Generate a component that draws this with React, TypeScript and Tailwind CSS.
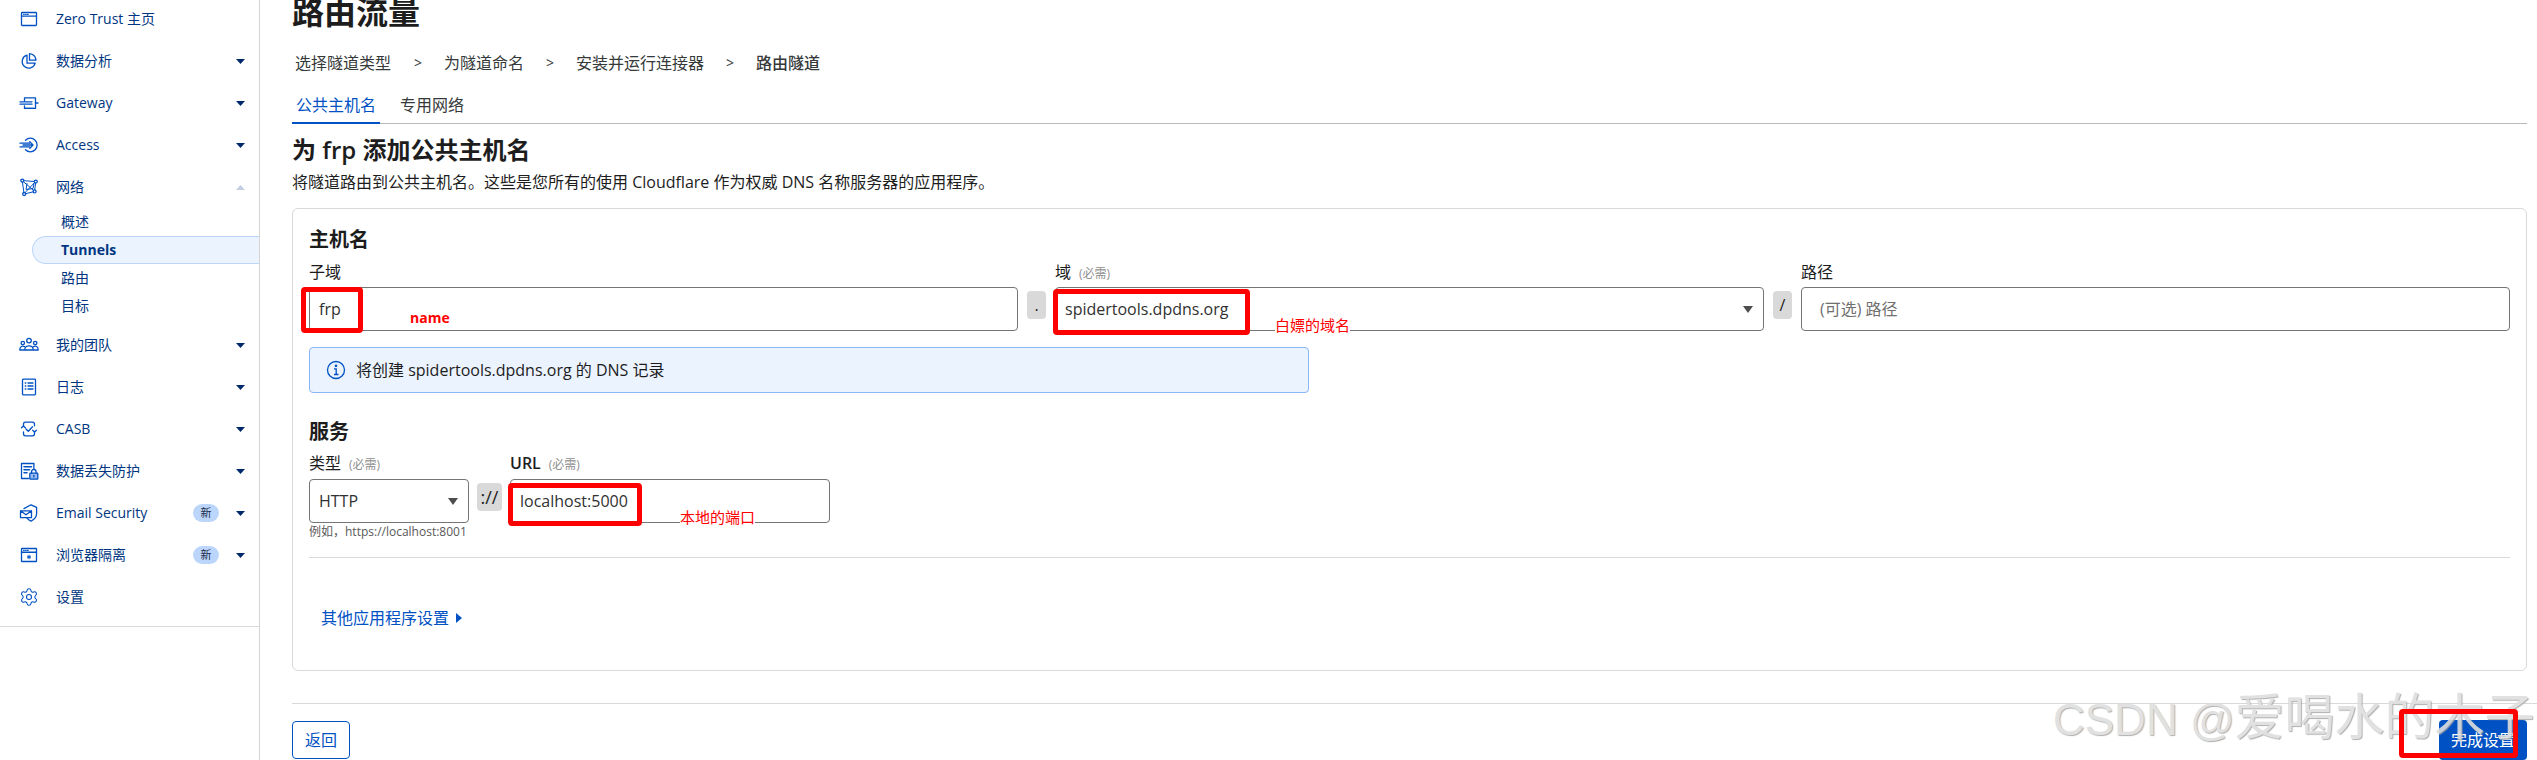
import { Settings } from "lucide-react";
import type { ReactNode } from "react";

function Icon({ children }: { children: ReactNode }) {
    return (
        <svg viewBox="0 0 20 20" className="h-5 w-5 shrink-0" fill="none" stroke="#0051c3" strokeWidth="1.3" strokeLinecap="round" strokeLinejoin="round">
            {children}
        </svg>
    );
}

const icons: Record<string, ReactNode> = {
    home: <Icon><rect x="2.5" y="3.5" width="15" height="13" rx=".8" /><path d="M2.5 7.2h15M4.6 5.3h.6M6.6 5.3h.6M8.6 5.3h.6" /></Icon>,
    pie: <Icon><path d="M8 4.2a6.6 6.6 0 1 0 8.2 8H8z" /><path d="M10.5 2.6c3.6.3 6 2.8 6.6 6.6h-6.6z" /></Icon>,
    gateway: <Icon><path d="M5.5 8V4.8h11v10.6h-11v-2.4" /><path d="M1 8.8h12M1 11.2h12M16.5 10H19" /><path d="M5.5 15.4h9" /></Icon>,
    access: <Icon><path d="M6.5 5.2a6.8 6.8 0 1 1 0 9.6" /><path d="M1 8.2h9.5M1 11.8h9.5M4 10h9.5M10.8 6.8 14 10l-3.2 3.2" /></Icon>,
    network: <Icon><circle cx="3.3" cy="3.6" r="1.5" /><circle cx="16.8" cy="4.6" r="1.5" /><circle cx="15.6" cy="14.4" r="1.5" /><circle cx="5.2" cy="17" r="1.5" /><path d="M4.8 3.7l10.5.8M16.6 6.1l-.9 6.8M14.2 14.8l-7.6 1.9M4.9 15.5 3.4 5.1M4.4 4.7l10.1 8.6M15.6 5.6 6 15.7M8 6.5l-1 6 7-1 1-5" strokeWidth="1" /></Icon>,
    team: <Icon><circle cx="10" cy="5.6" r="2.3" /><circle cx="3.8" cy="8" r="1.7" /><circle cx="16.2" cy="8" r="1.7" /><path d="M5.8 14.8c0-5.2 8.4-5.2 8.4 0M.8 14.8c0-3.4 2.6-4.4 4.8-3.2M19.2 14.8c0-3.4-2.6-4.4-4.8-3.2M.8 15h18.4" /></Icon>,
    logs: <Icon><rect x="3.5" y="2.2" width="13" height="15.6" rx=".8" /><path d="M6.2 6h.6M9 6h5M6.2 9h.6M9 9h5M6.2 12h.6M9 12h5" /></Icon>,
    casb: <Icon><path d="M4.5 7V5.2a2 2 0 0 1 2-2h7a2 2 0 0 1 2 2v1.6M15.5 13v1.8a2 2 0 0 1-2 2h-7a2 2 0 0 1-2-2V13" /><path d="m7 10 2.3 2.3 4.2-4.6M2.5 8.8 4.5 7l1.8 1.8M13.7 11.2l1.8 1.8 2-1.8" /></Icon>,
    dlp: <Icon><path d="M9.5 17.5H2.5v-15h12.4v6.2" /><path d="M5 5.8h7.5M5 8.8h5.5M5 11.8h3" strokeWidth="1.5" /><rect x="10.8" y="12.2" width="8" height="6" rx=".6" fill="#9dbdf0" /><path d="M12.6 12.2v-1.6a2.2 2.2 0 0 1 4.4 0v1.6" /><path d="M14.8 14.5v1.4" /></Icon>,
    email: <Icon><path d="M5 5.6 12 1.8l5.6 2.6v6.4c0 3.2-2.4 5.6-5.6 7.4-1.6-.8-3-1.8-4-3" /><path d="M1.5 7.8h11v6.8h-11zM1.5 7.8l5.5 4 5.5-4" /></Icon>,
    browser: <Icon><rect x="2.5" y="3.5" width="15" height="13" rx=".6" /><path d="M2.5 7.3h15" strokeWidth="1.4" /><path d="M4.6 5.3h.6M6.6 5.3h.6M8.6 5.3h.6" /><path d="M10 10.2v3.6M8.4 11.1l3.2 1.8M11.6 11.1l-3.2 1.8" strokeWidth="1" /></Icon>,
    settings: <Settings size={20} color="#0051c3" strokeWidth={1.3} />,
};

function Caret({ up = false }: { up?: boolean }) {
    return (
        <svg viewBox="0 0 9 5" className="h-[5px] w-[9px]" fill={up ? "#c3cfe0" : "#00296b"}>
            <path d={up ? "M0 5 4.5 0 9 5z" : "M0 0h9L4.5 5z"} />
        </svg>
    );
}

function NavRow({ icon, label, caret, badge }: { icon: string; label: string; caret?: "up" | "down"; badge?: boolean }) {
    return (
        <div className="flex h-[42px] items-center pl-[19px] pr-[14px] text-[#003681]">
            {icons[icon]}
            <span className="ml-[17px] flex-1 text-sm">{label}</span>
            {badge && <span className="mr-[17px] flex h-[18px] w-[26px] items-center justify-center rounded-full bg-[#bcd6fb] text-[11px] text-[#1d2d4a]">新</span>}
            {caret && <Caret up={caret === "up"} />}
        </div>
    );
}

function Sidebar() {
    return (
        <aside className="h-[760px] w-[260px] shrink-0 border-r border-[#d4d4d4]">
            <div className="-mt-[2px] border-b border-[#d9d9d9] pb-[8px]">
                <NavRow icon="home" label="Zero Trust 主页" />
                <NavRow icon="pie" label="数据分析" caret="down" />
                <NavRow icon="gateway" label="Gateway" caret="down" />
                <NavRow icon="access" label="Access" caret="down" />
                <NavRow icon="network" label="网络" caret="up" />
                <div className="mb-[4px] text-sm text-[#003681]">
                    <div className="flex h-7 items-center pl-[61px]">概述</div>
                    <div className="ml-[32px] flex h-7 items-center rounded-l-full border border-r-0 border-[#bcd6fb] bg-[#ebf3fe] pl-[28px] font-bold">Tunnels</div>
                    <div className="flex h-7 items-center pl-[61px]">路由</div>
                    <div className="flex h-7 items-center pl-[61px]">目标</div>
                </div>
                <NavRow icon="team" label="我的团队" caret="down" />
                <NavRow icon="logs" label="日志" caret="down" />
                <NavRow icon="casb" label="CASB" caret="down" />
                <NavRow icon="dlp" label="数据丢失防护" caret="down" />
                <NavRow icon="email" label="Email Security" caret="down" badge />
                <NavRow icon="browser" label="浏览器隔离" caret="down" badge />
                <NavRow icon="settings" label="设置" />
            </div>
        </aside>
    );
}

function Required() {
    return <span className="ml-2 text-xs text-[#8f8f8f]">(必需)</span>;
}

function Sep({ text }: { text: string }) {
    return <div className="mx-[9px] mt-[4px] flex h-7 w-[19px] shrink-0 items-center justify-center rounded bg-[#d9d9d9] text-[#1d1d1d]">{text}</div>;
}

function Field({ children, select = false, className = "" }: { children?: ReactNode; select?: boolean; className?: string }) {
    return (
        <div className={`flex h-[44px] items-center justify-between rounded border border-[#757575] bg-white pl-[9px] pr-[10px] text-[#313131] ${className}`}>
            <span>{children}</span>
            {select && (
                <svg viewBox="0 0 10 7" className="h-[7px] w-[10px]" fill="#4d4d4d">
                    <path d="M0 0h10L5 7z" />
                </svg>
            )}
        </div>
    );
}

function Card() {
    return (
        <div className="mt-[14px] h-[463px] rounded-md border border-[#d9d9d9] px-4 pt-[19px]">
            <h3 className="h-6 text-xl font-semibold leading-6">主机名</h3>
            <div className="mt-2 flex">
                <div className="flex-1">
                    <div className="mb-[3px] h-6 leading-6">子域</div>
                    <Field>frp</Field>
                </div>
                <div className="pt-[27px]"><Sep text="." /></div>
                <div className="flex-1">
                    <div className="mb-[3px] h-6 leading-6">域<Required /></div>
                    <Field select>spidertools.dpdns.org</Field>
                </div>
                <div className="pt-[27px]"><Sep text="/" /></div>
                <div className="flex-1">
                    <div className="mb-[3px] h-6 leading-6">路径</div>
                    <Field><span className="ml-[9px] text-[#6f6f6f]">(可选) 路径</span></Field>
                </div>
            </div>
            <div className="mt-4 flex h-[46px] w-[1000px] items-center rounded border border-[#8ab6f5] bg-[#ebf3fe] pl-4">
                <svg viewBox="0 0 20 20" className="h-5 w-5" fill="none" stroke="#0051c3" strokeWidth="1.3">
                    <circle cx="10" cy="10" r="8.5" />
                    <path d="M8 8.8h2.2v5.6M8 14.5h4.5" />
                    <circle cx="10" cy="5.8" r=".7" fill="#0051c3" />
                </svg>
                <span className="ml-[10px]">将创建 spidertools.dpdns.org 的 DNS 记录</span>
            </div>
            <h3 className="mt-[27px] h-6 text-xl font-semibold leading-6">服务</h3>
            <div className="mt-[7px] flex">
                <div className="w-[160px]">
                    <div className="mb-[4px] h-6 leading-6">类型<Required /></div>
                    <Field select>HTTP</Field>
                    <div className="mt-px h-4 whitespace-nowrap text-xs leading-4 text-[#595959]">例如，https://localhost:8001</div>
                </div>
                <div className="mx-[8px] mt-[32px] flex h-7 w-[25px] items-center justify-center rounded bg-[#d9d9d9] text-lg text-[#1d1d1d]">://</div>
                <div className="w-[320px]">
                    <div className="mb-[4px] h-6 leading-6"><span className="font-semibold">URL</span><Required /></div>
                    <Field>localhost:5000</Field>
                </div>
            </div>
            <div className="mt-[17px] border-t border-[#d9d9d9]" />
            <div className="ml-3 mt-[48px] flex h-6 items-center text-[#0051c3]">
                其他应用程序设置
                <svg viewBox="0 0 6 10" className="ml-[7px] h-[10px] w-[6px]" fill="#0051c3"><path d="M0 0l6 5-6 5z" /></svg>
            </div>
        </div>
    );
}

function Main() {
    return (
        <main className="min-w-0 flex-1 pl-[32px] pr-[10px]">
            <h1 className="-mt-[8px] h-10 text-[32px] font-semibold leading-10">路由流量</h1>
            <div className="mt-[19px] flex h-6 items-center pl-[3px] text-[#36393a]">
                <span>选择隧道类型</span>
                <span className="ml-[23px] mr-[22px] text-sm">&gt;</span>
                <span>为隧道命名</span>
                <span className="mx-[22px] text-sm">&gt;</span>
                <span>安装并运行连接器</span>
                <span className="mx-[22px] text-sm">&gt;</span>
                <span className="font-medium">路由隧道</span>
            </div>
            <div className="mt-[13px] flex h-9 border-b border-[#b8b8b8]">
                <div className="h-9 border-b-2 border-[#0051c3] px-1 pt-[5px] text-[#0051c3]">公共主机名</div>
                <div className="ml-5 pt-[5px] text-[#36393a]">专用网络</div>
            </div>
            <h2 className="mt-[10px] h-8 text-2xl font-semibold leading-8">为 frp 添加公共主机名</h2>
            <p className="mt-1 h-6 leading-6">将隧道路由到公共主机名。这些是您所有的使用 Cloudflare 作为权威 DNS 名称服务器的应用程序。</p>
            <Card />
            <div className="-mr-[10px] mt-[32px] border-t border-[#d9d9d9]" />
            <div className="mt-[17px] flex items-start justify-between">
                <button className="h-[38px] w-[58px] rounded border border-[#0051c3] text-[#0051c3]">返回</button>
                <button className="-mt-px h-[40px] w-[88px] rounded bg-[#0051c3] text-white">完成设置</button>
            </div>
        </main>
    );
}

function Annotations() {
    return (
        <>
            <div className="absolute left-[301px] top-[287px] h-[46px] w-[62px] rounded-sm border-[5px] border-[#ff0000]" />
            <span className="absolute left-[410px] top-[309px] text-[14px] font-bold leading-[18px] text-[#ff0000]">name</span>
            <div className="absolute left-[1053px] top-[289px] h-[46px] w-[197px] rounded-sm border-[5px] border-[#ff0000]" />
            <span className="absolute left-[1275px] top-[316px] bg-white text-[15px] leading-[18px] text-[#ff0000]">白嫖的域名</span>
            <div className="absolute left-[508px] top-[483px] h-[43px] w-[134px] rounded-sm border-[5px] border-[#ff0000]" />
            <span className="absolute left-[680px] top-[508px] bg-white text-[15px] leading-[18px] text-[#ff0000]">本地的端口</span>
            <div className="absolute left-[2053px] top-[690px] flex items-baseline whitespace-nowrap font-['Liberation_Sans','Noto_Sans_CJK_SC',sans-serif] leading-[56px] text-[#dedede] opacity-90 [text-shadow:1px_1px_1px_#a8a8a8]">
                <span className="text-[44px]">CSDN @</span>
                <span className="text-[50px]">爱喝水的木子</span>
            </div>
            <div className="absolute left-[2399px] top-[709px] h-[49px] w-[119px] rounded-sm border-[5px] border-[#ff0000]" />
        </>
    );
}

export default function App() {
    return (
        <div className="relative flex h-[760px] w-[2537px] overflow-hidden bg-white font-['Open_Sans','Noto_Sans_CJK_SC',sans-serif] text-base text-[#1d1d1d]">
            <Sidebar />
            <Main />
            <Annotations />
        </div>
    );
}
